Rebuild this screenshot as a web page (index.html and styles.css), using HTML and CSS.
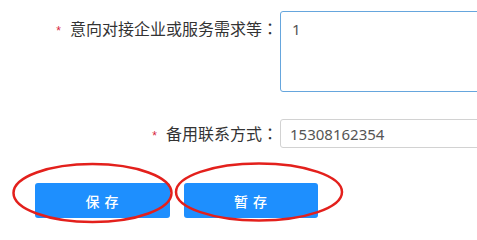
FILE: index.html
```html
<!DOCTYPE html>
<html lang="zh-CN">
<head>
<meta charset="utf-8">
<link rel="stylesheet" href="styles.css">
</head>
<body>
<form class="form">
  <div class="row row-area">
    <label class="label"><span class="star">*</span>意向对接企业或服务需求等<span class="colon" lang="ja">：</span></label>
    <textarea class="area">1</textarea>
  </div>
  <div class="row row-input">
    <label class="label"><span class="star">*</span>备用联系方式<span class="colon" lang="ja">：</span></label>
    <input class="input" type="text" value="15308162354">
  </div>
  <div class="actions">
    <button type="button" class="btn btn-save">保 存</button>
    <button type="button" class="btn btn-draft">暂 存</button>
  </div>
</form>
<svg class="marks" width="477" height="224" viewBox="0 0 477 224">
  <ellipse cx="92.5" cy="193" rx="79" ry="29" fill="none" stroke="#e3201c" stroke-width="2.5"/>
  <ellipse cx="259" cy="192" rx="83" ry="28.5" fill="none" stroke="#e3201c" stroke-width="2.5"/>
</svg>
</body>
</html>
```
FILE: styles.css
```css
html, body {
  margin: 0;
  padding: 0;
  background: #fff;
  overflow: hidden;
  width: 477px;
  height: 224px;
}
body {
  position: relative;
  font-family: "Noto Sans CJK SC", "Noto Sans", sans-serif;
  color: #333;
}
.form {
  display: flex;
  flex-direction: column;
  padding-top: 11px;
}
.row {
  display: flex;
  align-items: flex-start;
}
.label {
  flex: 0 0 278px;
  width: 278px;
  text-align: right;
  font-size: 16px;
  line-height: 34px;
  color: #333;
  margin-right: 2px;
  white-space: nowrap;
}
.colon {
  font-family: "Noto Sans CJK JP", sans-serif;
}
.row-input .label {
  line-height: 29px;
}
.star {
  color: #d7263d;
  font-size: 12px;
  margin-right: 9px;
  font-family: "Liberation Sans", sans-serif;
}
.area {
  flex: 0 0 auto;
  box-sizing: border-box;
  width: 230px;
  height: 81px;
  border: 1px solid #66a6dd;
  border-radius: 3px;
  padding: 7px 11px;
  font-family: "Noto Sans", sans-serif;
  font-size: 15px;
  line-height: 20px;
  color: #555;
  resize: none;
  outline: none;
  margin: 0;
}
.row-input {
  margin-top: 27px;
}
.input {
  flex: 0 0 auto;
  box-sizing: border-box;
  width: 230px;
  height: 29px;
  border: 1px solid #d2d2d2;
  border-radius: 3px;
  padding: 0 9px;
  font-family: "Noto Sans", sans-serif;
  font-size: 15px;
  color: #555;
  outline: none;
  margin: 0;
}
.actions {
  display: flex;
  gap: 14px;
  margin-top: 32px;
  padding-left: 35px;
}
.btn {
  height: 35px;
  border: none;
  border-radius: 3px;
  background: #1e8ffe;
  color: #fff;
  font-family: "Noto Sans CJK SC", sans-serif;
  font-size: 14px;
  font-weight: 500;
  letter-spacing: 1px;
  padding: 0;
  margin: 0;
}
.btn-save {
  width: 135px;
}
.btn-draft {
  width: 134px;
}
.marks {
  position: absolute;
  left: 0;
  top: 0;
  pointer-events: none;
}
```
